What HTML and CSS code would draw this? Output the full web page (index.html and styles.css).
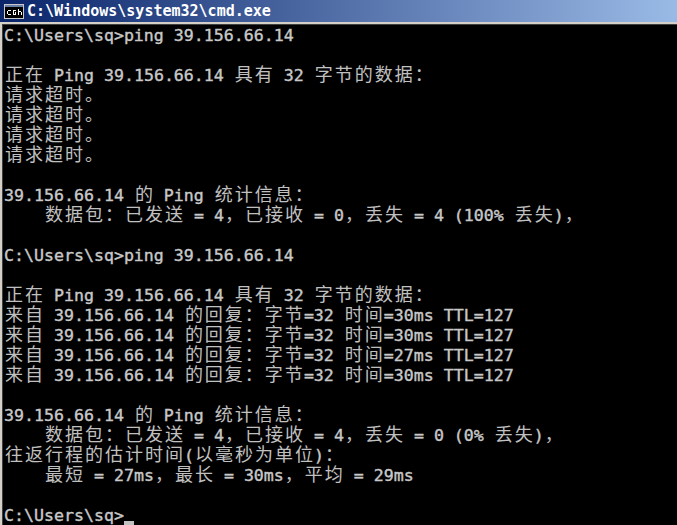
FILE: index.html
```html
<!DOCTYPE html>
<html lang="zh">
<head>
<meta charset="utf-8">
<title>cmd.exe</title>
<link rel="stylesheet" href="styles.css">
</head>
<body>
<div class="window">
  <header class="titlebar">
    <svg class="icon" width="20" height="15" viewBox="0 0 20 15" shape-rendering="crispEdges">
      <rect x="0" y="0" width="20" height="15" fill="#c8c8c8"/>
      <rect x="1" y="1" width="18" height="2" fill="#6a7fa8"/>
      <rect x="1" y="3" width="18" height="11" fill="#000"/>
      <path d="M4 6.5h3M3.500 7v3M4 10.500h3M9 6.500h3M9.500 7v3M9 10.500h3M11.500 8v2M14.500 5v6M15 7.500h2M17.500 8v3" stroke="#fff" fill="none"/>
    </svg>
    <span class="title">C:\Windows\system32\cmd.exe</span>
  </header>
  <main class="frame">
    <div class="console">
    <div class="line">C:\Users\sq&gt;ping 39.156.66.14</div>
    <div class="line"></div>
    <div class="line"><span class="zh">正在</span> Ping 39.156.66.14 <span class="zh">具有</span> 32 <span class="zh">字节的数据：</span></div>
    <div class="line"><span class="zh">请求超时。</span></div>
    <div class="line"><span class="zh">请求超时。</span></div>
    <div class="line"><span class="zh">请求超时。</span></div>
    <div class="line"><span class="zh">请求超时。</span></div>
    <div class="line"></div>
    <div class="line">39.156.66.14 <span class="zh">的</span> Ping <span class="zh">统计信息：</span></div>
    <div class="line">    <span class="zh">数据包：已发送</span> = 4<span class="zh">，已接收</span> = 0<span class="zh">，丢失</span> = 4 (100% <span class="zh">丢失</span>)<span class="zh">，</span></div>
    <div class="line"></div>
    <div class="line">C:\Users\sq&gt;ping 39.156.66.14</div>
    <div class="line"></div>
    <div class="line"><span class="zh">正在</span> Ping 39.156.66.14 <span class="zh">具有</span> 32 <span class="zh">字节的数据：</span></div>
    <div class="line"><span class="zh">来自</span> 39.156.66.14 <span class="zh">的回复：字节</span>=32 <span class="zh">时间</span>=30ms TTL=127</div>
    <div class="line"><span class="zh">来自</span> 39.156.66.14 <span class="zh">的回复：字节</span>=32 <span class="zh">时间</span>=30ms TTL=127</div>
    <div class="line"><span class="zh">来自</span> 39.156.66.14 <span class="zh">的回复：字节</span>=32 <span class="zh">时间</span>=27ms TTL=127</div>
    <div class="line"><span class="zh">来自</span> 39.156.66.14 <span class="zh">的回复：字节</span>=32 <span class="zh">时间</span>=30ms TTL=127</div>
    <div class="line"></div>
    <div class="line">39.156.66.14 <span class="zh">的</span> Ping <span class="zh">统计信息：</span></div>
    <div class="line">    <span class="zh">数据包：已发送</span> = 4<span class="zh">，已接收</span> = 4<span class="zh">，丢失</span> = 0 (0% <span class="zh">丢失</span>)<span class="zh">，</span></div>
    <div class="line"><span class="zh">往返行程的估计时间</span>(<span class="zh">以毫秒为单位</span>)<span class="zh">：</span></div>
    <div class="line">    <span class="zh">最短</span> = 27ms<span class="zh">，最长</span> = 30ms<span class="zh">，平均</span> = 29ms</div>
    <div class="line"></div>
    <div class="line">C:\Users\sq&gt;<span class="cursor"></span></div>
    </div>
  </main>
</div>
</body>
</html>
```

FILE: styles.css
```css
* { box-sizing: border-box; }
html, body { margin: 0; padding: 0; background: #000; }
body { width: 677px; height: 525px; overflow: hidden; }
.window { display: flex; flex-direction: column; height: 525px; background: #000; }
.titlebar {
  display: flex; align-items: center; gap: 3px;
  height: 22px; padding: 0 0 0 4px;
  background: linear-gradient(90deg, #0a246a, #9abae6);
}
.icon { flex: none; }
.title {
  font: bold 15px/22px "DejaVu Sans Mono", monospace;
  color: #fff; white-space: pre;
}
.frame {
  flex: 1; min-height: 0; overflow: hidden;
  border-top: 2px solid #d4d0c8;
  border-left: 2px solid #d4d0c8;
}
.console {
  height: 100%;
  padding: 1px 0 0 1px;
  border-top: 1px solid #404040;
  border-left: 1px solid #404040;
  font: 16.6px/20px "DejaVu Sans Mono", "Noto Sans CJK SC", monospace;
  color: #c8c8c8;
  -webkit-text-stroke: 0.4px #c8c8c8;
}
.line { height: 20px; white-space: pre; }
.zh {
  padding-left: 1px; margin-right: -1px;
  font: 400 18px/0 "Noto Sans CJK SC", sans-serif;
  letter-spacing: 2px;
  color: #c0c0c0;
  -webkit-text-stroke: 0;
}
.cursor { display: inline-block; width: 10px; height: 5px; background: #c0c0c0; vertical-align: -5px; }
```
